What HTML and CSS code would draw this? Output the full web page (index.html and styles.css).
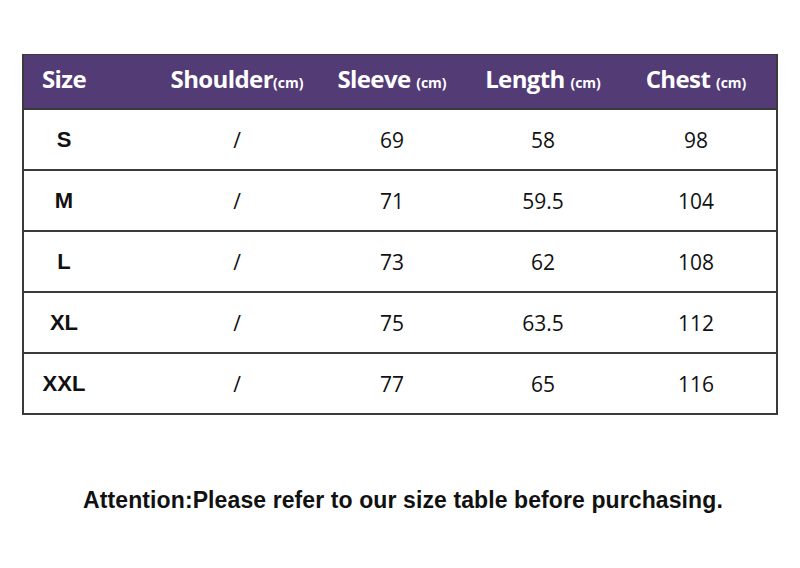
FILE: index.html
```html
<!DOCTYPE html>
<html lang="en">
<head>
<meta charset="utf-8">
<title>Size table</title>
<link rel="stylesheet" href="styles.css">
</head>
<body>
<div class="sheet">
  <div class="table">
    <div class="row head">
      <div class="cell c1">Size</div>
      <div class="cell c2">Shoulder<span class="unit">(cm)</span></div>
      <div class="cell c3">Sleeve <span class="unit">(cm)</span></div>
      <div class="cell c4">Length <span class="unit">(cm)</span></div>
      <div class="cell c5">Chest <span class="unit">(cm)</span></div>
    </div>
    <div class="row">
      <div class="cell c1 size">S</div>
      <div class="cell c2">/</div>
      <div class="cell c3">69</div>
      <div class="cell c4">58</div>
      <div class="cell c5">98</div>
    </div>
    <div class="row">
      <div class="cell c1 size">M</div>
      <div class="cell c2">/</div>
      <div class="cell c3">71</div>
      <div class="cell c4">59.5</div>
      <div class="cell c5">104</div>
    </div>
    <div class="row">
      <div class="cell c1 size">L</div>
      <div class="cell c2">/</div>
      <div class="cell c3">73</div>
      <div class="cell c4">62</div>
      <div class="cell c5">108</div>
    </div>
    <div class="row">
      <div class="cell c1 size">XL</div>
      <div class="cell c2">/</div>
      <div class="cell c3">75</div>
      <div class="cell c4">63.5</div>
      <div class="cell c5">112</div>
    </div>
    <div class="row">
      <div class="cell c1 size">XXL</div>
      <div class="cell c2">/</div>
      <div class="cell c3">77</div>
      <div class="cell c4">65</div>
      <div class="cell c5">116</div>
    </div>
  </div>
  <p class="note">Attention:Please refer to our size table before purchasing.</p>
</div>
</body>
</html>
```

FILE: styles.css
```css
html, body {
  margin: 0;
  padding: 0;
  background: #ffffff;
}

.sheet {
  width: 800px;
  height: 568px;
  overflow: hidden;
  padding-top: 54px;
  box-sizing: border-box;
}

.table {
  margin: 0 22px;
  border: 2px solid #3a3a3a;
  border-top-width: 1px;
  display: flex;
  flex-direction: column;
}

.row {
  display: grid;
  grid-template-columns: 80px 210px 156px 146px 1fr;
  height: 59px;
  border-top: 2px solid #3a3a3a;
  align-items: center;
  font-family: "Open Sans", "Liberation Sans", sans-serif;
  font-size: 21px;
  color: #111111;
}

.row.head {
  height: 53px;
  box-sizing: border-box;
  padding-bottom: 6px;
  border-top: none;
  background: #533b76;
  color: #ffffff;
  font-weight: 700;
  font-size: 24px;
  letter-spacing: -0.6px;
}

.cell {
  text-align: center;
  white-space: nowrap;
}

.c2 {
  padding-left: 56px;
}

.unit {
  font-size: 14px;
  letter-spacing: 0;
}

.size {
  font-family: "Liberation Sans", Arial, sans-serif;
  font-weight: 700;
  font-size: 22px;
}

.note {
  margin: 72px 0 0;
  padding-left: 6px;
  text-align: center;
  font-family: "Liberation Sans", Arial, sans-serif;
  font-weight: 700;
  font-size: 23px;
  letter-spacing: 0.1px;
  color: #111111;
}
```
